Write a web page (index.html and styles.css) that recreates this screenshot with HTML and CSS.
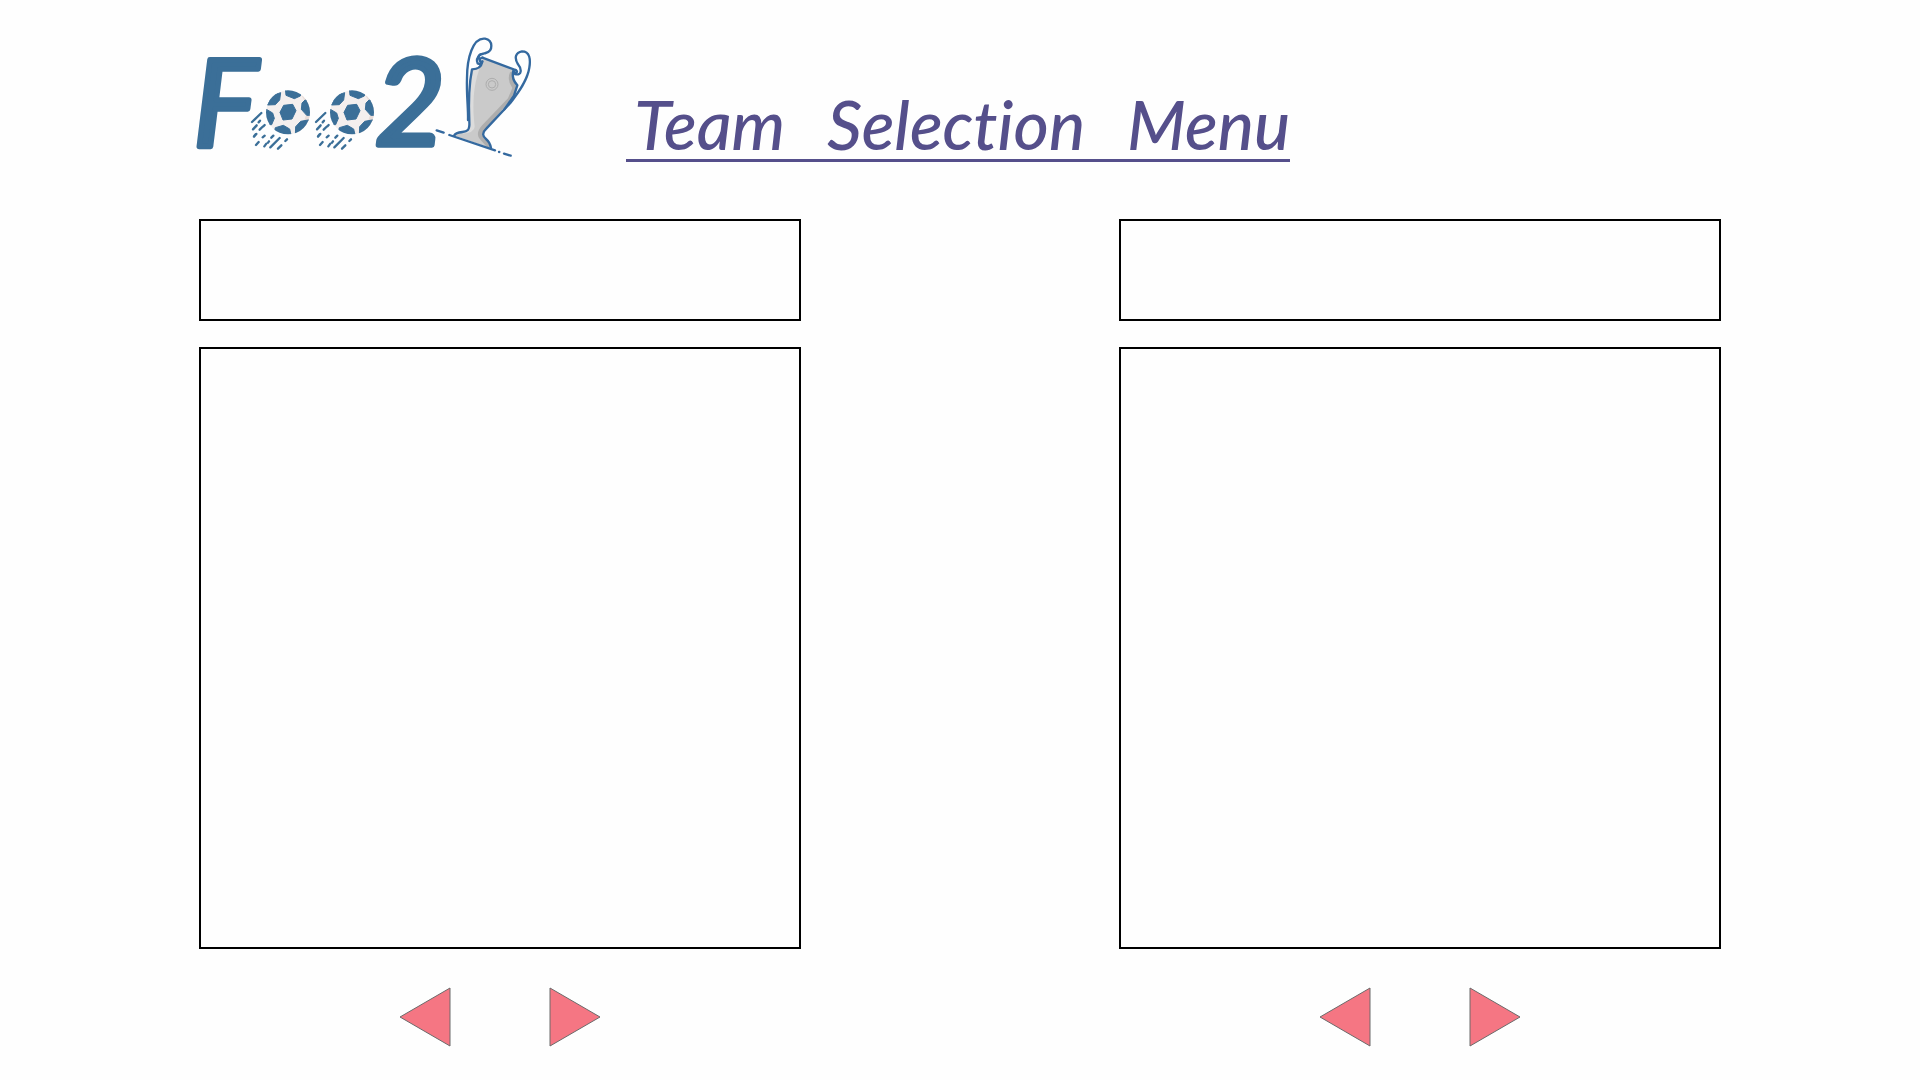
FILE: index.html
```html
<!DOCTYPE html>
<html lang="en">
<head>
<meta charset="utf-8">
<title>Team Selection Menu</title>
<link rel="stylesheet" href="styles.css">
</head>
<body>
<header class="header">
  <svg class="logo" viewBox="0 0 1110 426" role="img" aria-label="Foo21">
    <defs>
      <clipPath id="ball-clip"><circle cx="324" cy="277" r="66"/></clipPath>
      <g id="ball">
        <g clip-path="url(#ball-clip)">
          <circle cx="324" cy="277" r="66" fill="#f4efee"/>
          <path d="M350 210Q384 240 378 285Q370 320 340 345L400 345V210Z" fill="#e8dcd8"/>
          <g fill="#3b6f98" stroke="#3b6f98" stroke-width="3" stroke-linejoin="round">
            <path d="M311 256L338 253L348 272L336 297L309 300L300 277Z"/>
            <path d="M262 255L276 226L302 218L299 240L286 254Z"/>
            <path d="M316 205H365L361 228L343 236L318 226Z"/>
            <path d="M375 240L395 242V286L380 286L364 268L366 249Z"/>
            <path d="M347 320L362 304L390 299L380 345L346 345Z"/>
            <path d="M286 323L310 316L329 327L334 348H280Z"/>
            <path d="M250 268L261 269L278 279L283 295L275 314L250 315Z"/>
          </g>
        </g>
        <path d="M216 306L244 279M219 328L229 318M236 307L240 302M222 349L227 343M219 328L230 316M239 329L247 321M222 350L229 342M250 319L254 315M248 352L254 347M228 375L236 366M253 379L259 371M264 368L267 364M274 353L280 347M271 382L299 354M294 386L304 376M316 363L321 358" stroke="#3b6f98" stroke-width="7" stroke-linecap="round"/>
      </g>
    </defs>
    <text class="logo-letter" x="40" y="377">F</text>
    <text class="logo-letter" x="584" y="374">2</text>
    <use href="#ball"/>
    <use href="#ball" x="192"/>
    <path d="M908 113L1008 150Q995 170 1012 196L1002 227L913 333Q902 344 912 355Q932 368 933 385L820 346L858 334Q869 330 868 310L864 230L876 147Q903 144 908 113Z" fill="#cacaca"/>
    <path d="M990 157Q980 180 997 204L984 235L905 317Q885 341 900 358L920 380L933 385Q932 367 912 354Q903 344 913 333L1002 227L1012 196Q994 172 1004 152Z" fill="#adadad"/>
    <path d="M880 151L898 147Q872 220 884 320Q884 338 845 341L862 334Q869 330 868 310L865 230Z" fill="#dcdcdc"/>
    <g fill="none" stroke="#adadad" stroke-width="3"><circle cx="936" cy="193" r="18"/><circle cx="936" cy="193" r="11"/></g>
    <g fill="none" stroke="#34699f" stroke-width="7" stroke-linecap="round" stroke-linejoin="round">
      <path d="M907 113L1007 150"/>
      <path d="M902 124C888 104 901 103 917 99C940 93 940 61 915 56C878 52 861 115 861 174C859 225 865 260 864 300"/>
      <path d="M908 113C894 115 900 132 907 125C904 142 890 148 876 148C866 198 865 240 868 305C870 332 861 335 847 336Q826 338 822 347"/>
      <path d="M901 103Q886 117 893 130Q904 135 907 124"/>
      <path d="M1005 162C1027 168 1025 146 1014 133C1001 112 1008 97 1026 94C1050 94 1052 119 1048 143C1042 185 1009 225 991 249L919 326C905 339 908 349 918 357Q930 367 933 384"/>
      <path d="M1007 150C1017 155 1005 165 1000 152C995 174 1002 184 1012 196L1002 227L973 268"/>
      <path d="M808 345L945 391M770 331L791 338M957 396H958M972 401L992 407"/>
    </g>
  </svg>
  <h1 class="title"><span>Team</span> <span>Selection</span> <span>Menu</span></h1>
</header>
<main class="teams">
  <section class="team" aria-label="First team">
    <div class="box name"></div>
    <div class="box preview"></div>
    <div class="controls">
      <button class="arrow" type="button" aria-label="Previous first team"><svg viewBox="0 0 52 60"><path d="M1 30L51 1V59Z"/></svg></button>
      <button class="arrow" type="button" aria-label="Next first team"><svg viewBox="0 0 52 60"><path d="M51 30L1 1V59Z"/></svg></button>
    </div>
  </section>
  <section class="team" aria-label="Second team">
    <div class="box name"></div>
    <div class="box preview"></div>
    <div class="controls">
      <button class="arrow" type="button" aria-label="Previous second team"><svg viewBox="0 0 52 60"><path d="M1 30L51 1V59Z"/></svg></button>
      <button class="arrow" type="button" aria-label="Next second team"><svg viewBox="0 0 52 60"><path d="M51 30L1 1V59Z"/></svg></button>
    </div>
  </section>
</main>
</body>
</html>
```
FILE: styles.css
```css
* { box-sizing: border-box; }
body { margin: 0; background: #fefefe; }
.header { display: flex; align-items: flex-end; gap: 76px; padding: 20px 180px 0; }
.logo { width: 370px; height: 142px; flex: none; overflow: visible; }
.logo-letter {
  font: italic 400 364px Lato, sans-serif;
  fill: #3b6f98;
  stroke: #3b6f98;
  stroke-width: 16px;
  stroke-linejoin: round;
}
.title {
  display: flex;
  gap: 42px;
  margin: 0;
  padding-left: 8px;
  border-bottom: 3px solid #554f8b;
  color: #554f8b;
  font: italic 500 68px/70px Lato, sans-serif;
  font-variant-ligatures: none;
  white-space: nowrap;
}
.teams { display: grid; grid-template-columns: 1fr 1fr; gap: 318px; padding: 57px 199px 32px; }
.team { display: flex; flex-direction: column; }
.box { border: 2px solid #000; }
.name { height: 102px; margin-bottom: 26px; }
.preview { aspect-ratio: 1; }
.controls { display: flex; justify-content: center; gap: 98px; margin-top: 38px; }
.arrow { width: 52px; height: 60px; padding: 0; border: 0; background: none; cursor: pointer; }
.arrow svg { display: block; width: 52px; height: 60px; }
.arrow path { fill: #f57683; stroke: #6b6b6b; stroke-width: 1px; }
```
